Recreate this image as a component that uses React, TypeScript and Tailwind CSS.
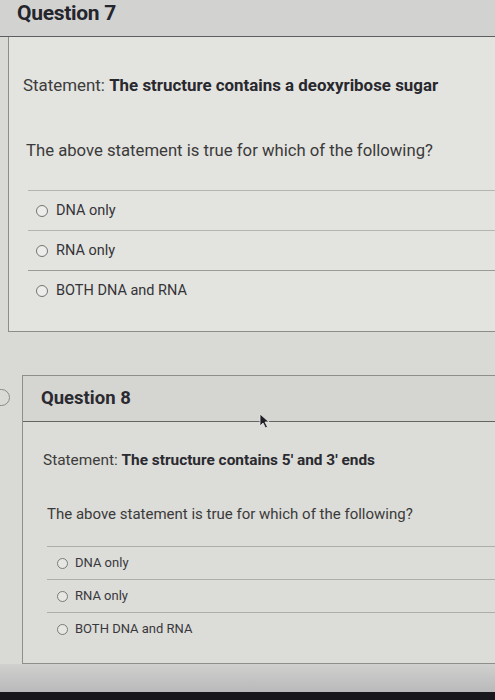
import React from "react";

function Radio({ size }: { size: "lg" | "sm" }) {
  return (
    <span
      className={
        size === "lg"
          ? "inline-block w-[12px] h-[12px] rounded-full border-[1.5px] border-[#747474] bg-[#ececea] shrink-0"
          : "inline-block w-[11px] h-[11px] rounded-full border-[1.5px] border-[#7a7a7a] bg-[#e6e6e2] shrink-0"
      }
    />
  );
}

export default function App() {
  const opts = ["DNA only", "RNA only", "BOTH DNA and RNA"];
  return (
    <div
      className="w-[495px] h-[700px] overflow-hidden bg-[#d9d9d5] relative flex flex-col"
      style={{ fontFamily: "Roboto, 'Liberation Sans', sans-serif" }}
    >
      {/* Question 7 header */}
      <div className="h-[37px] shrink-0 bg-[#d2d2d0] border-b border-[#5e5e5e] pl-[17px] pt-[1px]">
        <span className="block text-[21px] leading-[24px] font-bold text-[#25252d] tracking-[-0.3px]">Question 7</span>
      </div>

      {/* Question 7 body */}
      <div className="ml-[8px] shrink-0 border-l border-b border-[#8c8c8a] bg-[#e3e3df] pb-[21px]">
        <div className="mt-[38px] pl-[14px] text-[16.9px] leading-[20px] text-[#3c3c3c]">
          Statement: <span className="font-bold text-[#28282e]">The structure contains a deoxyribose sugar</span>
        </div>
        <div className="mt-[46px] pl-[17px] text-[16.7px] leading-[20px] text-[#3a3a3a]">
          The above statement is true for which of the following?
        </div>
        <div className="mt-[29px] ml-[19px] flex flex-col">
          {opts.map((o, i) => (
            <div
              key={o}
              className={
                "h-[40px] flex items-center gap-[8px] pl-[8px] border-t border-[#b4b4b0]" +
                (i === 2 ? " border-t-[#9a9a96]" : "")
              }
            >
              <Radio size="lg" />
              <span className="text-[14.5px] text-[#333338]">{o}</span>
            </div>
          ))}
        </div>
      </div>

      {/* Question 8 */}
      <div className="mt-[43px] flex shrink-0">
        <div className="w-[22px] shrink-0 relative">
          <span className="absolute left-[-9px] top-[14px] w-[19px] h-[17px] rounded-full border-[1.5px] border-[#8a8a88]" />
        </div>
        <div className="flex-1 border-t border-l border-b border-[#8e8e8c] bg-[#dcdcd8] relative">
          <div className="h-[46px] bg-[#d5d5d1] border-b border-[#646464] pl-[18px] flex items-center">
            <span className="text-[18.5px] font-bold text-[#2a2a30]">Question 8</span>
          </div>
          <div className="mt-[28px] pl-[20px] text-[15.4px] leading-[20px] text-[#3c3c3c]">
            Statement: <span className="font-bold text-[#2a2a30]">The structure contains 5′ and 3′ ends</span>
          </div>
          <div className="mt-[34px] pl-[24px] text-[15px] leading-[20px] text-[#3a3a3a]">
            The above statement is true for which of the following?
          </div>
          <div className="mt-[22px] ml-[24px] flex flex-col pb-[18px]">
            {opts.map((o) => (
              <div key={o} className="h-[33px] flex items-center gap-[7px] pl-[10px] border-t border-[#adada9]">
                <Radio size="sm" />
                <span className="text-[13px] text-[#38383c]">{o}</span>
              </div>
            ))}
          </div>
          {/* mouse cursor */}
          <svg className="absolute left-[236px] top-[37px]" width="13" height="16" viewBox="0 0 13 16">
            <path d="M1 1 L1 13 L4 10 L6.5 15 L8.5 14 L6 9 L10 9 Z" fill="#1e1e24" stroke="#e8e8e8" strokeWidth="0.8" />
          </svg>
        </div>
      </div>

      <div className="flex-1 bg-gradient-to-b from-[#d0d0ce] to-[#b9b9bb]" />
      <div className="h-[8px] shrink-0 bg-[#17171d]" />
    </div>
  );
}
